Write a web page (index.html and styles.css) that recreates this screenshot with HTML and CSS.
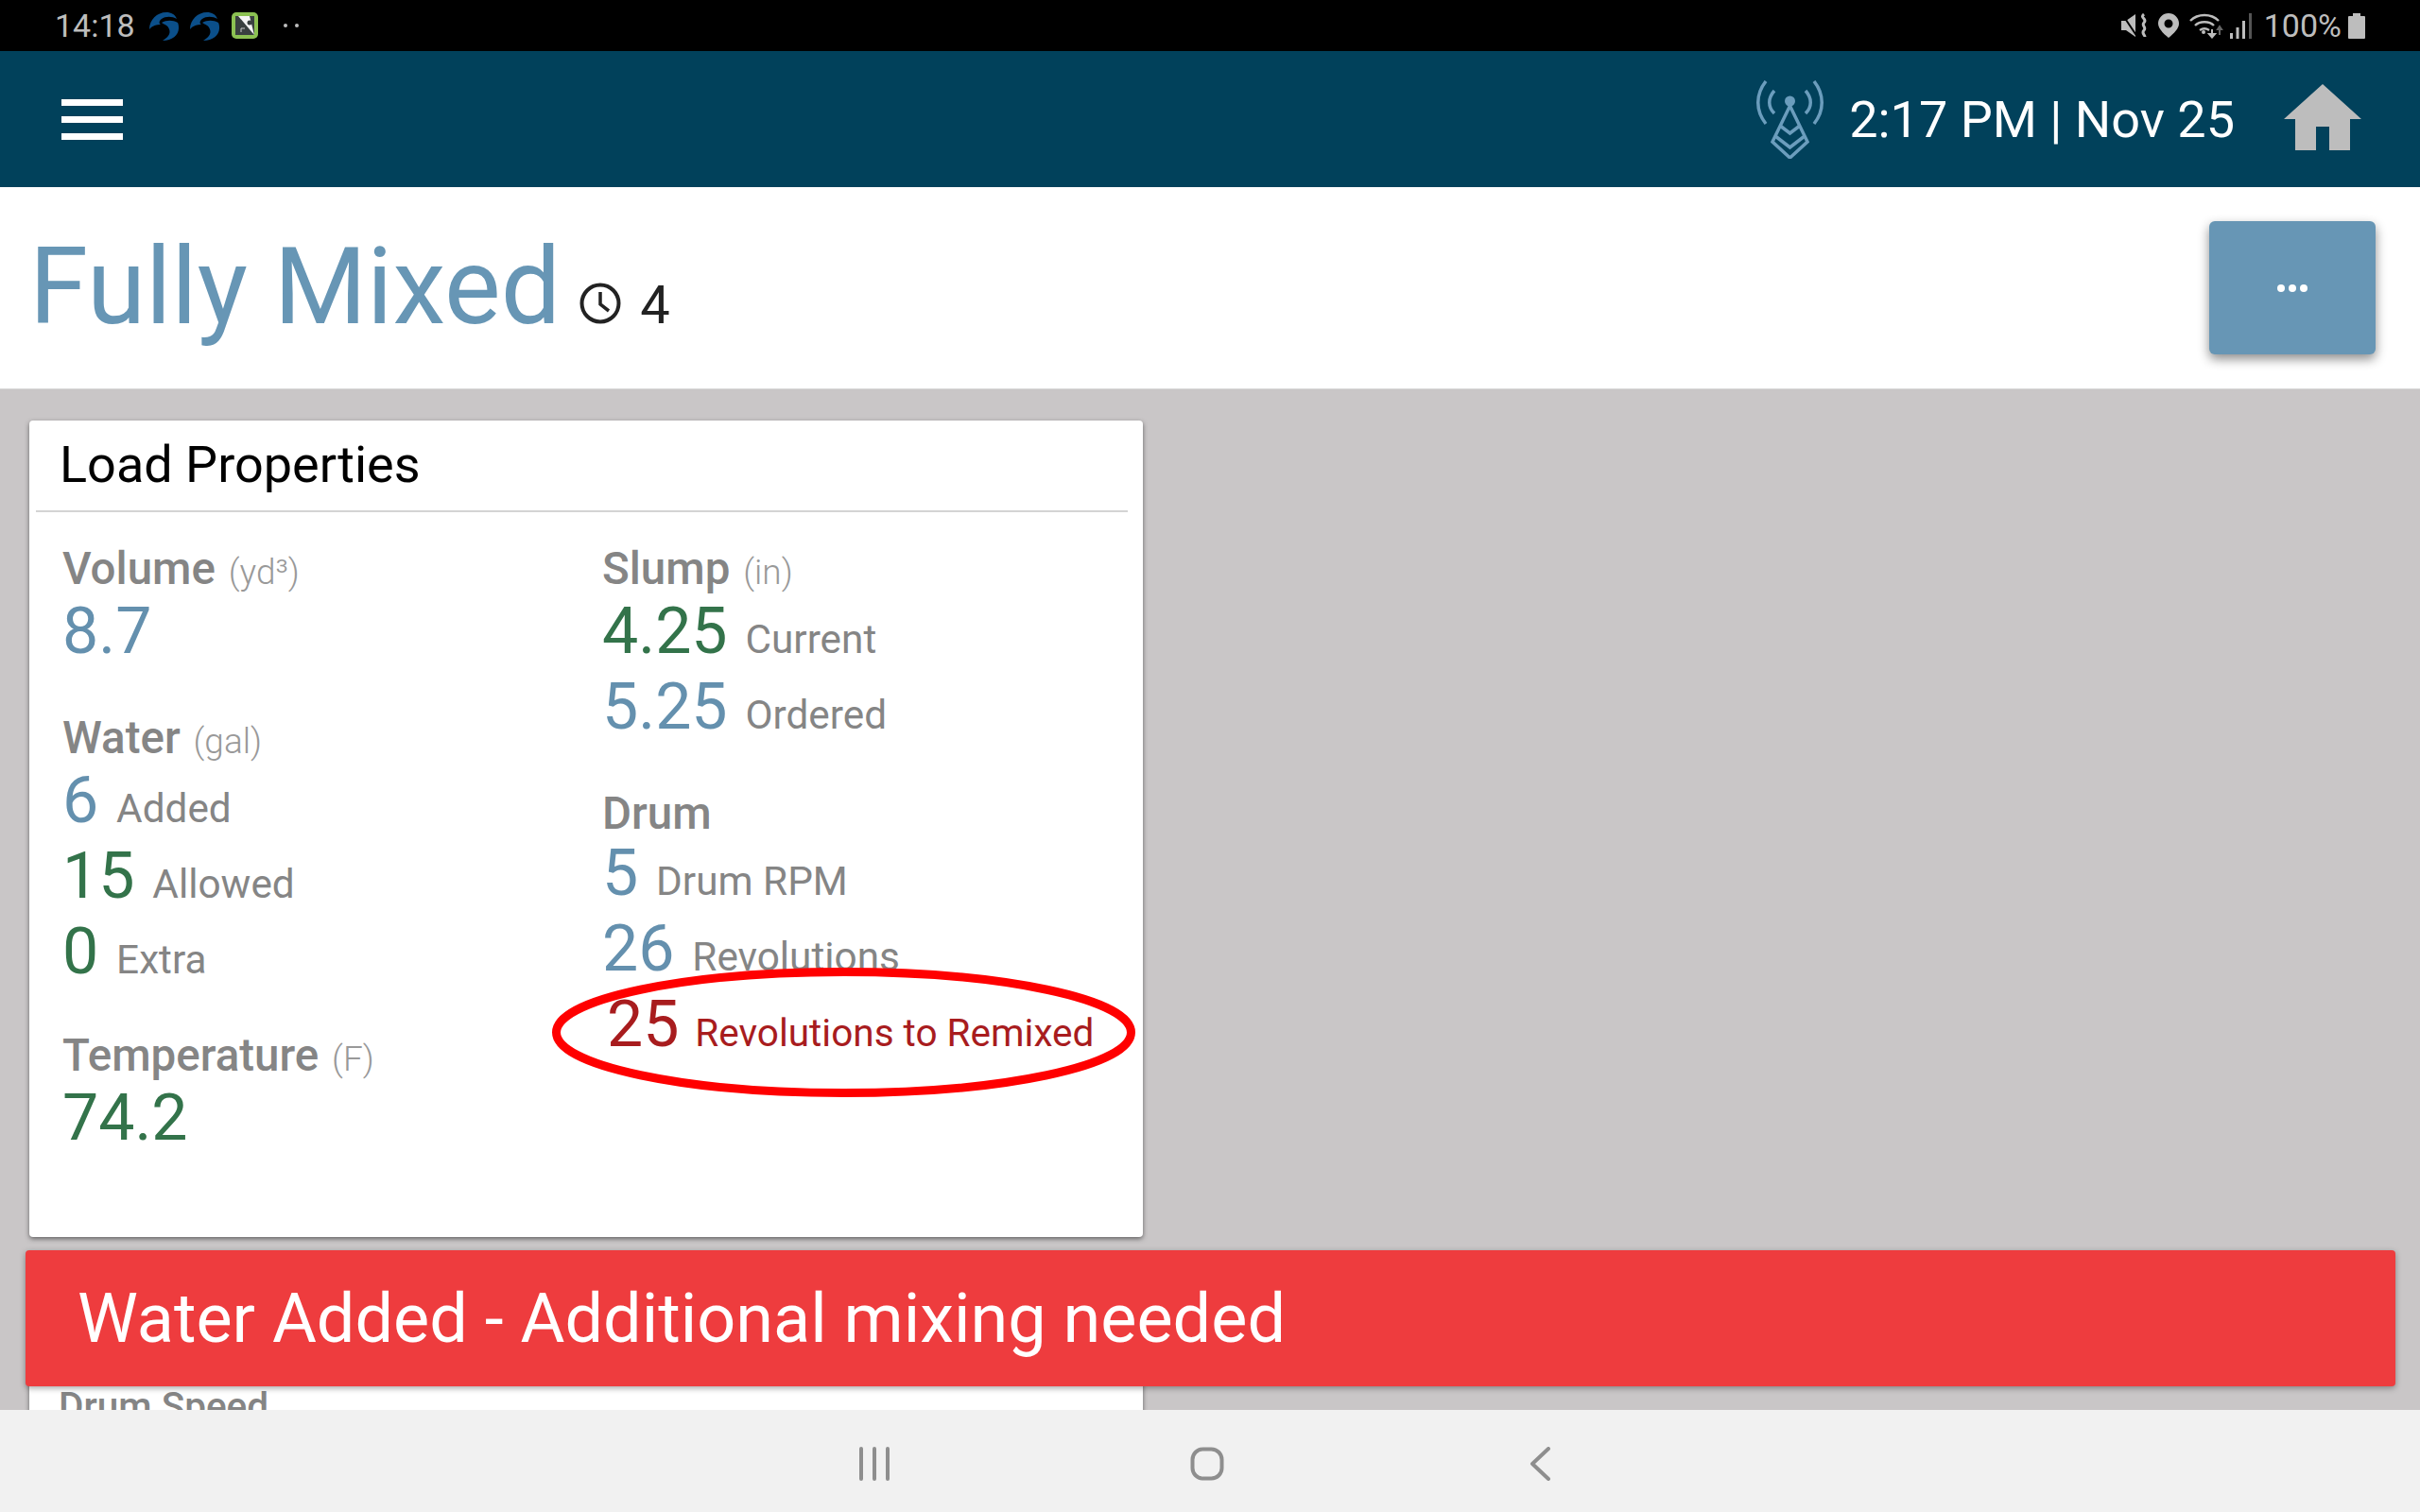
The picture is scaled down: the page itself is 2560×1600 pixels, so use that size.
FILE: index.html
```html
<!DOCTYPE html>
<html lang="en">
<head>
    <meta charset="UTF-8">
    <title>Fully Mixed</title>
    <link rel="stylesheet" href="styles.css">
</head>
<body>

    <!-- Android status bar -->
    <div class="status-bar">
        <div class="status-left">
            <span class="status-time">14:18</span>
            <svg class="swirl" viewBox="0 0 31 31"><path d="M0 19C0 9 8 1 18 1c5 0 9 2 11 7-5-3-12-3-16 0-3 2-3 5-1 6-4 0-9 1-12 5z" fill="#0b4f8a"/><path d="M13 12c5-3 12-3 17 0 1 2 1 4 1 6 0 7-7 13-17 13 5-3 9-7 7-12-1-4-5-5-8-7z" fill="#0b4f8a"/></svg>
            <svg class="swirl" viewBox="0 0 31 31"><path d="M0 19C0 9 8 1 18 1c5 0 9 2 11 7-5-3-12-3-16 0-3 2-3 5-1 6-4 0-9 1-12 5z" fill="#0b4f8a"/><path d="M13 12c5-3 12-3 17 0 1 2 1 4 1 6 0 7-7 13-17 13 5-3 9-7 7-12-1-4-5-5-8-7z" fill="#0b4f8a"/></svg>
            <svg class="app-icon" viewBox="0 0 28 28">
                <rect width="28" height="28" rx="5" fill="#8cc152"/>
                <rect x="4" y="4" width="20" height="20" fill="#3a4040"/>
                <path d="M7 4h12l5 20z" fill="#f4f4f4"/>
                <circle cx="19" cy="11" r="2.500" fill="#3a4040"/>
                <path d="M10 21v-4h4" fill="none" stroke="#ccc" stroke-width="1"/>
            </svg>
            <span class="status-dots"><i></i><i></i></span>
        </div>
        <div class="status-right">
            <svg class="st-mute" viewBox="0 0 27 26">
                <path d="M0 8h5l10-7v24L5 18H0z" fill="#bdbdbd"/>
                <path d="M1 1l16 24" stroke="#000" stroke-width="2"/>
                <path d="M24 1c-5 4 4 5 0 9-3 3 3 5 0 8-3 3 1 5 1 7" fill="none" stroke="#bdbdbd" stroke-width="3"/>
            </svg>
            <svg class="st-pin" viewBox="0 0 22 26"><path fill-rule="evenodd" d="M11 0a11 11 0 0 1 11 11c0 5-5 10-11 15C5 21 0 16 0 11A11 11 0 0 1 11 0zm0 6.500a4.500 4.500 0 1 0 0 9 4.500 4.500 0 0 0 0-9z" fill="#bdbdbd"/></svg>
            <svg class="st-wifi" viewBox="0 0 36 28">
                <g fill="none" stroke="#bdbdbd" stroke-width="2.400">
                    <path d="M1 9c8-8 22-8 30 0"/>
                    <path d="M6 14c5-5 15-5 20 0"/>
                    <path d="M11 19c3-2 7-2 10 0"/>
                </g>
                <circle cx="15" cy="21" r="2" fill="#bdbdbd"/>
                <path d="M24 18v7M21 23l3 3.500 3-3.500z" stroke="#bdbdbd" stroke-width="2" fill="#bdbdbd"/>
                <path d="M32 24v-8M30 18l2-3 2 3z" stroke="#666" stroke-width="2" fill="#666"/>
            </svg>
            <svg class="st-signal" viewBox="0 0 23 27">
                <rect x="0" y="21" width="3" height="6" fill="#bdbdbd"/>
                <rect x="6.500" y="15" width="3" height="12" fill="#bdbdbd"/>
                <rect x="13" y="8" width="3" height="19" fill="#bdbdbd"/>
                <rect x="20" y="0" width="3" height="27" fill="#555"/>
            </svg>
            <span class="status-battery-text">100%</span>
            <svg class="st-battery" viewBox="0 0 18 27"><path d="M5 0h8v3h4a1 1 0 0 1 1 1v22a1 1 0 0 1-1 1H1a1 1 0 0 1-1-1V4a1 1 0 0 1 1-1h4z" fill="#bdbdbd"/></svg>
        </div>
    </div>

    <!-- App header -->
    <header class="top-bar">
        <div class="hamburger"><span></span><span></span><span></span></div>
        <div class="top-right">
            <svg class="antenna" viewBox="0 0 73 83">
                <g fill="none" stroke="#6b9dbd" stroke-width="3.500">
                    <path d="M11 1C0 15 0 32 11 46"/>
                    <path d="M62 1c11 14 11 31 0 45"/>
                    <path d="M20 11c-7 8-7 17 0 24"/>
                    <path d="M53 11c7 8 7 17 0 24"/>
                    <path d="M36.500 27L18 65l18.500 17L55 65z"/>
                    <path d="M21 59l15.500 12L52 59"/>
                    <path d="M26 48l10.500 8L47 48"/>
                </g>
                <circle cx="36.500" cy="22" r="5.500" fill="#6b9dbd"/>
            </svg>
            <span class="clock-text">2:17 PM | Nov 25</span>
            <svg class="home" viewBox="0 0 82 70"><path d="M41 0l41 37H70v33H48V45H34v25H12V37H0z" fill="#bdbdbd"/></svg>
        </div>
    </header>

    <!-- Page title -->
    <div class="title-bar">
        <div class="title-group">
            <h1>Fully Mixed</h1>
            <svg class="clock-icon" viewBox="0 0 44 44">
                <circle cx="22" cy="22" r="19.500" fill="none" stroke="#222" stroke-width="4"/>
                <path d="M22 10v13l9 7" fill="none" stroke="#222" stroke-width="3.500"/>
            </svg>
            <span class="title-count">4</span>
        </div>
        <button class="more-btn"><i></i><i></i><i></i></button>
    </div>

    <main class="content">
        <section class="card">
            <div class="card-header">Load Properties</div>
            <div class="card-body">
                <div class="col">
                    <div class="group">
                        <div class="label">Volume <small>(yd³)</small></div>
                        <div class="row"><span class="blue">8.7</span></div>
                    </div>
                    <div class="group">
                        <div class="label">Water <small>(gal)</small></div>
                        <div class="row"><span class="blue">6</span> <span class="desc">Added</span></div>
                        <div class="row"><span class="green">15</span> <span class="desc">Allowed</span></div>
                        <div class="row"><span class="green">0</span> <span class="desc">Extra</span></div>
                    </div>
                    <div class="group group-temp">
                        <div class="label">Temperature <small>(F)</small></div>
                        <div class="row"><span class="green">74.2</span></div>
                    </div>
                </div>
                <div class="col">
                    <div class="group">
                        <div class="label">Slump <small>(in)</small></div>
                        <div class="row"><span class="green">4.25</span> <span class="desc">Current</span></div>
                        <div class="row"><span class="blue">5.25</span> <span class="desc">Ordered</span></div>
                    </div>
                    <div class="group">
                        <div class="label">Drum</div>
                        <div class="row"><span class="blue">5</span> <span class="desc">Drum RPM</span></div>
                        <div class="row"><span class="blue">26</span> <span class="desc">Revolutions</span></div>
                        <div class="row remix">
                            <!-- hand-drawn annotation over the row -->
                            <svg class="remix-ring" viewBox="0 0 617 137">
                                <ellipse cx="308.500" cy="68.500" rx="304" ry="64" fill="#fff" stroke="#f00" stroke-width="9"/>
                            </svg>
                            <span class="remix-num">25</span> <span class="desc">Revolutions to Remixed</span>
                        </div>
                    </div>
                </div>
            </div>
        </section>

        <section class="card card-next">
            <div class="label">Drum Speed</div>
        </section>

        <!-- Toast -->
        <div class="alert">Water Added - Additional mixing needed</div>
    </main>

    <!-- Android nav bar -->
    <nav class="nav-bar">
        <svg class="nav-recent" viewBox="0 0 34 36"><path d="M3 2v32M17 2v32M31 2v32" stroke="#8e8e8e" stroke-width="4" stroke-linecap="round"/></svg>
        <svg class="nav-home" viewBox="0 0 36 36"><rect x="2.500" y="2.500" width="31" height="31" rx="11" fill="none" stroke="#8e8e8e" stroke-width="4"/></svg>
        <svg class="nav-back" viewBox="0 0 22 36"><path d="M20 2L3 18l17 16" fill="none" stroke="#8e8e8e" stroke-width="4" stroke-linecap="round" stroke-linejoin="round"/></svg>
    </nav>

</body>
</html>
```

FILE: styles.css
```css
* {
    box-sizing: border-box;
}
body {
    margin: 0;
    width: 2560px;
    height: 1600px;
    overflow: hidden;
    display: flex;
    flex-direction: column;
    font-family: Roboto, "Liberation Sans", sans-serif;
    background-color: #c9c6c7;
}

/* Status bar */
.status-bar {
    height: 54px;
    flex: none;
    background: #000;
    color: #bdbdbd;
    display: flex;
    justify-content: space-between;
    align-items: center;
    padding: 0 58px 0 58px;
    font-size: 34px;
}
.status-left,
.status-right {
    display: flex;
    align-items: center;
}
.status-time {
    margin-right: 15px;
}
.swirl {
    width: 31px;
    height: 31px;
    margin-right: 12px;
}
.app-icon {
    width: 28px;
    height: 28px;
    margin-left: 1px;
}
.status-dots {
    display: flex;
    gap: 8px;
    margin-left: 27px;
}
.status-dots i {
    width: 4px;
    height: 4px;
    border-radius: 50%;
    background: #bdbdbd;
}
.st-mute {
    width: 27px;
    height: 26px;
}
.st-pin {
    width: 22px;
    height: 26px;
    margin-left: 12px;
}
.st-wifi {
    width: 36px;
    height: 28px;
    margin-left: 11px;
}
.st-signal {
    width: 23px;
    height: 27px;
    margin-left: 7px;
}
.status-battery-text {
    margin-left: 13px;
}
.st-battery {
    width: 18px;
    height: 27px;
    margin-left: 7px;
}

/* Top bar */
.top-bar {
    height: 144px;
    flex: none;
    background: #01415b;
    display: flex;
    justify-content: space-between;
    align-items: center;
    padding: 0 62px 0 65px;
}
.hamburger {
    display: flex;
    flex-direction: column;
    gap: 11px;
}
.hamburger span {
    display: block;
    width: 65px;
    height: 7px;
    background: #fff;
}
.top-right {
    display: flex;
    align-items: center;
}
.antenna {
    width: 73px;
    height: 83px;
}
.clock-text {
    color: #fff;
    font-size: 54px;
    margin-left: 26px;
}
.home {
    width: 82px;
    height: 70px;
    margin-left: 52px;
    margin-bottom: 4px;
}

/* Title */
.title-bar {
    height: 214px;
    flex: none;
    background: #fff;
    border-bottom: 1px solid #d8d8d8;
    display: flex;
    justify-content: space-between;
    padding: 36px 47px 0 31px;
}
.title-group {
    display: flex;
    align-items: baseline;
    height: 140px;
}
h1 {
    margin: 0;
    font-size: 112.500px;
    font-weight: 400;
    line-height: 140px;
    color: #6796b5;
}
.clock-icon {
    width: 44px;
    height: 44px;
    margin-left: 20px;
    transform: translateY(1px);
}
.title-count {
    font-size: 56px;
    color: #222;
    margin-left: 20px;
}
.more-btn {
    width: 176px;
    height: 141px;
    border: none;
    border-radius: 6px;
    background: #6796b5;
    box-shadow: 0 5px 12px rgba(0, 0, 0, 0.45);
    display: flex;
    justify-content: center;
    align-items: center;
    gap: 4px;
}
.more-btn i {
    width: 8px;
    height: 8px;
    border-radius: 50%;
    background: #fff;
}

/* Content */
.content {
    flex: 1;
    position: relative;
    overflow: hidden;
    padding: 33px 0 0 31px;
}
.card {
    width: 1178px;
    background: #fff;
    border-radius: 4px;
    box-shadow: 0 2px 5px rgba(0, 0, 0, 0.5);
}
.card-header {
    height: 97px;
    margin: 0 16px 0 7px;
    padding-left: 25px;
    border-bottom: 2px solid #d4d4d4;
    font-size: 54px;
    line-height: 93px;
    color: #000;
}
.card-body {
    display: grid;
    grid-template-columns: 571px 1fr;
    padding: 38px 0 86px 35px;
}
.group + .group {
    margin-top: 51px;
}
.group + .group-temp {
    margin-top: 48px;
}
.label {
    font-size: 47.500px;
    font-weight: 500;
    line-height: 45px;
    color: #858585;
}
.label small {
    font-size: 37px;
    font-weight: 300;
    margin-left: 2px;
    color: #999;
}
.row {
    font-size: 68px;
    line-height: 80px;
    white-space: nowrap;
}
.blue {
    color: #6490ae;
}
.green {
    color: #33734a;
}
.desc {
    font-size: 42.300px;
    line-height: 1;
    color: #858585;
    margin-left: 2px;
}
.remix {
    position: relative;
    padding-left: 5px;
    color: #a81c1e;
}
.remix .desc {
    font-size: 40.500px;
    margin-left: 0;
    color: #a81c1e;
}
.remix-num,
.remix .desc {
    position: relative;
}
.remix-ring {
    position: absolute;
    width: 617px;
    height: 137px;
    left: -53px;
    top: -20px;
}
.card-next {
    margin-top: 20px;
    padding: 134px 0 40px 31px;
}
.card-next .label {
    font-size: 40.500px;
    line-height: 50px;
}
.alert {
    position: absolute;
    left: 27px;
    right: 26px;
    bottom: 25px;
    height: 144px;
    display: flex;
    align-items: center;
    padding-left: 55px;
    background: #ee3c3e;
    border-radius: 4px;
    box-shadow: 0 2px 6px rgba(0, 0, 0, 0.35);
    font-size: 72px;
    color: #fff;
}

/* Nav bar */
.nav-bar {
    height: 108px;
    flex: none;
    position: relative;
    background: #f1f1f1;
    display: flex;
    align-items: center;
    padding: 6px 0 0 908px;
}
.nav-recent {
    width: 34px;
    height: 36px;
}
.nav-home {
    width: 36px;
    height: 36px;
    margin-left: 317px;
}
.nav-back {
    width: 22px;
    height: 36px;
    margin-left: 323px;
}
```
